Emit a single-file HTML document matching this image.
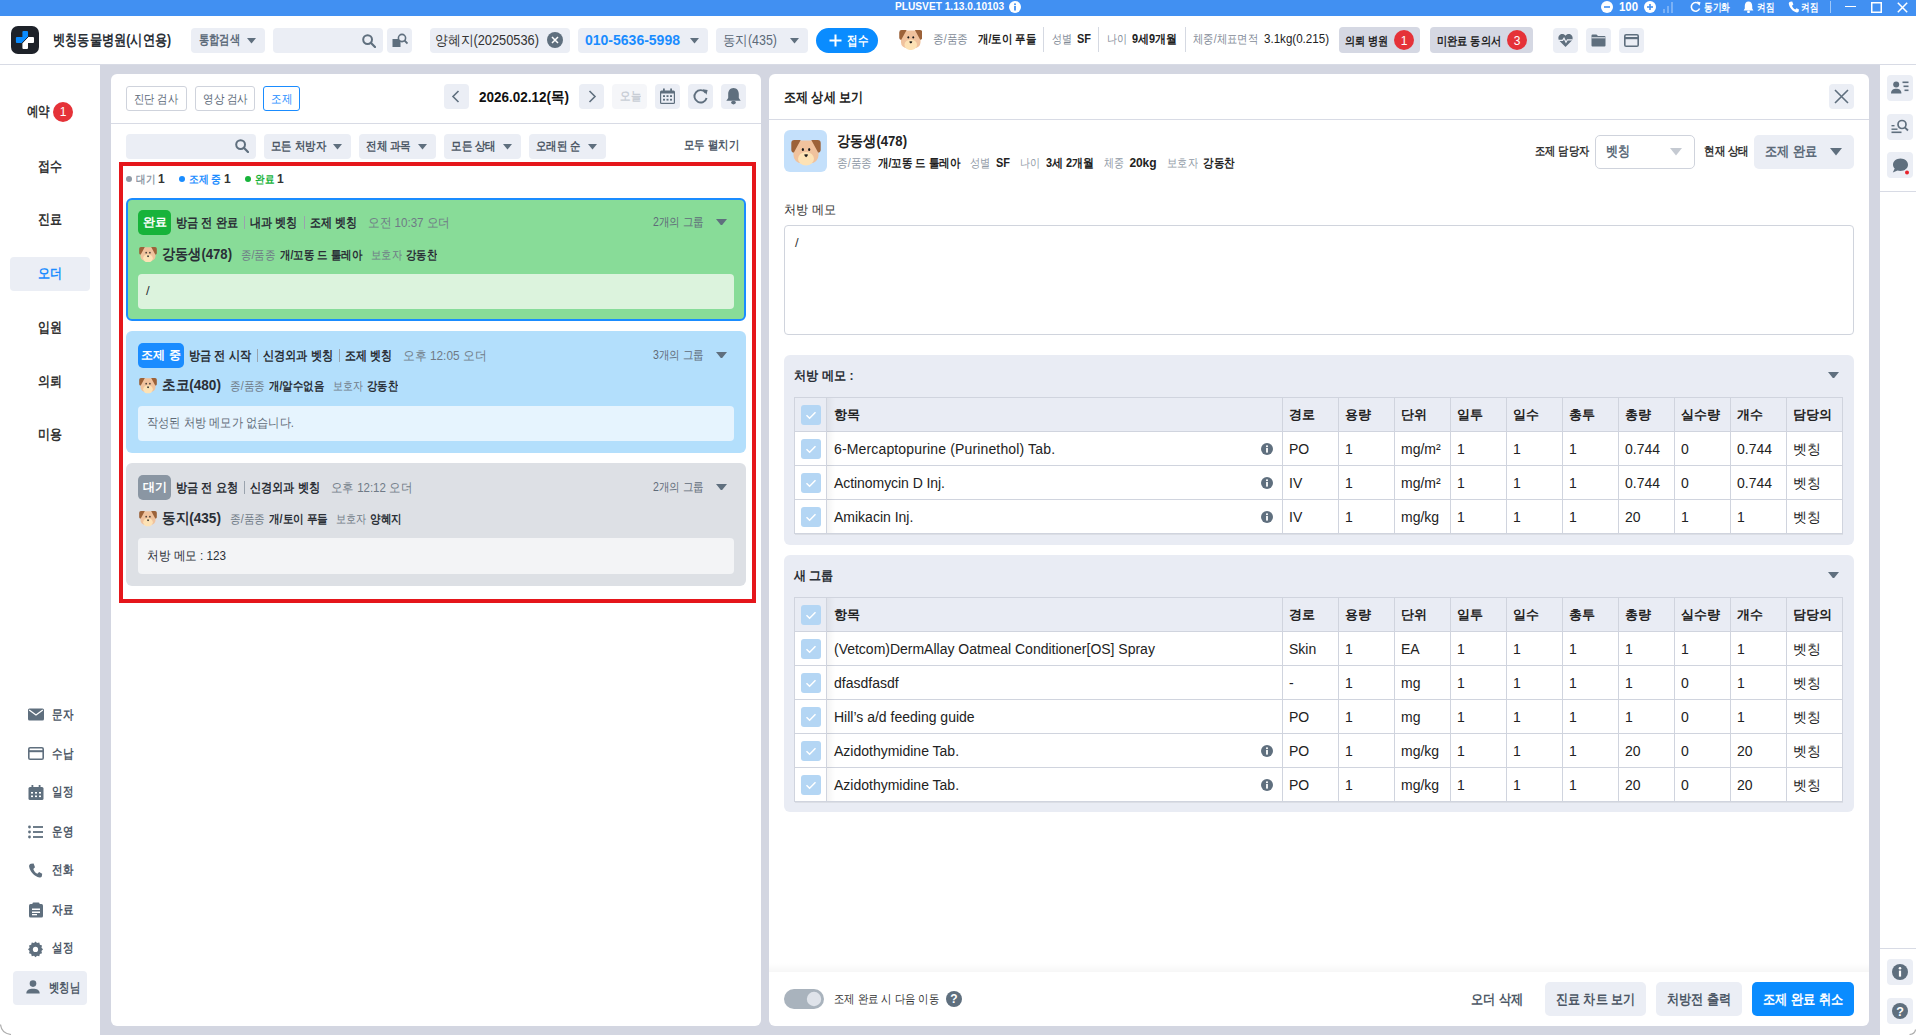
<!DOCTYPE html>
<html><head><meta charset="utf-8"><style>
html,body{margin:0;padding:0;}
body{width:1916px;height:1035px;position:relative;overflow:hidden;font-family:"Liberation Sans",sans-serif;background:#fff;}
.t{position:absolute;white-space:nowrap;}
#t1{transform:scaleX(0.924);transform-origin:0 50%}
#t2{transform:scaleX(0.949);transform-origin:0 50%}
#t3{transform:scaleX(0.788);transform-origin:0 50%}
#t4{transform:scaleX(0.773);transform-origin:0 50%}
#t5{transform:scaleX(0.773);transform-origin:0 50%}
#t6{transform:scaleX(0.814);transform-origin:0 50%}
#t7{transform:scaleX(0.788);transform-origin:0 50%}
#t8{transform:scaleX(0.915);transform-origin:0 50%}
#t9{letter-spacing:0.00px}
#t10{transform:scaleX(0.890);transform-origin:0 50%}
#t11{transform:scaleX(0.808);transform-origin:0 50%}
#t12{transform:scaleX(0.890);transform-origin:0 50%}
#t13{transform:scaleX(0.870);transform-origin:0 50%}
#t14{transform:scaleX(0.833);transform-origin:0 50%}
#t15{transform:scaleX(0.912);transform-origin:0 50%}
#t16{transform:scaleX(0.833);transform-origin:0 50%}
#t17{transform:scaleX(0.912);transform-origin:0 50%}
#t18{transform:scaleX(0.863);transform-origin:0 50%}
#t19{transform:scaleX(0.965);transform-origin:0 50%}
#t20{transform:scaleX(0.837);transform-origin:0 50%}
#t22{transform:scaleX(0.849);transform-origin:0 50%}
#t24{transform:scaleX(0.857);transform-origin:0 50%}
#t25{transform:scaleX(0.857);transform-origin:0 50%}
#t26{transform:scaleX(0.857);transform-origin:0 50%}
#t27{transform:scaleX(0.857);transform-origin:0 50%}
#t28{transform:scaleX(0.857);transform-origin:0 50%}
#t29{transform:scaleX(0.821);transform-origin:0 50%}
#t31{transform:scaleX(0.857);transform-origin:0 50%}
#t32{transform:scaleX(0.808);transform-origin:0 50%}
#t33{transform:scaleX(0.808);transform-origin:0 50%}
#t34{transform:scaleX(0.808);transform-origin:0 50%}
#t35{transform:scaleX(0.808);transform-origin:0 50%}
#t36{transform:scaleX(0.808);transform-origin:0 50%}
#t37{transform:scaleX(0.808);transform-origin:0 50%}
#t38{transform:scaleX(0.808);transform-origin:0 50%}
#t39{transform:scaleX(0.795);transform-origin:0 50%}
#t40{transform:scaleX(0.857);transform-origin:0 50%}
#t41{transform:scaleX(0.876);transform-origin:0 50%}
#t42{transform:scaleX(0.875);transform-origin:0 50%}
#t43{transform:scaleX(0.899);transform-origin:0 50%}
#t44{transform:scaleX(0.875);transform-origin:0 50%}
#t45{transform:scaleX(0.868);transform-origin:0 50%}
#t46{transform:scaleX(0.876);transform-origin:0 50%}
#t47{transform:scaleX(0.876);transform-origin:0 50%}
#t48{transform:scaleX(0.867);transform-origin:0 50%}
#t49{transform:scaleX(0.868);transform-origin:0 50%}
#t50{transform:scaleX(0.864);transform-origin:0 50%}
#t52{transform:scaleX(0.887);transform-origin:0 50%}
#t54{transform:scaleX(0.864);transform-origin:0 50%}
#t57{transform:scaleX(0.858);transform-origin:0 50%}
#t58{transform:scaleX(0.854);transform-origin:0 50%}
#t59{transform:scaleX(0.845);transform-origin:0 50%}
#t60{transform:scaleX(0.894);transform-origin:0 50%}
#t61{transform:scaleX(0.879);transform-origin:0 50%}
#t62{transform:scaleX(0.875);transform-origin:0 50%}
#t63{transform:scaleX(0.877);transform-origin:0 50%}
#t64{transform:scaleX(0.872);transform-origin:0 50%}
#t65{transform:scaleX(0.861);transform-origin:0 50%}
#t66{transform:scaleX(0.861);transform-origin:0 50%}
#t69{transform:scaleX(0.858);transform-origin:0 50%}
#t70{transform:scaleX(0.858);transform-origin:0 50%}
#t71{transform:scaleX(0.845);transform-origin:0 50%}
#t72{transform:scaleX(0.910);transform-origin:0 50%}
#t73{transform:scaleX(0.879);transform-origin:0 50%}
#t74{transform:scaleX(0.907);transform-origin:0 50%}
#t75{transform:scaleX(0.890);transform-origin:0 50%}
#t76{transform:scaleX(0.868);transform-origin:0 50%}
#t77{transform:scaleX(0.833);transform-origin:0 50%}
#t78{transform:scaleX(0.861);transform-origin:0 50%}
#t79{transform:scaleX(0.862);transform-origin:0 50%}
#t81{transform:scaleX(0.858);transform-origin:0 50%}
#t82{transform:scaleX(0.858);transform-origin:0 50%}
#t83{transform:scaleX(0.883);transform-origin:0 50%}
#t84{transform:scaleX(0.879);transform-origin:0 50%}
#t85{transform:scaleX(0.907);transform-origin:0 50%}
#t86{transform:scaleX(0.890);transform-origin:0 50%}
#t87{transform:scaleX(0.885);transform-origin:0 50%}
#t88{transform:scaleX(0.847);transform-origin:0 50%}
#t89{transform:scaleX(0.875);transform-origin:0 50%}
#t90{transform:scaleX(0.896);transform-origin:0 50%}
#t91{transform:scaleX(0.861);transform-origin:0 50%}
#t92{transform:scaleX(0.875);transform-origin:0 50%}
#t93{transform:scaleX(0.890);transform-origin:0 50%}
#t94{transform:scaleX(0.878);transform-origin:0 50%}
#t95{transform:scaleX(0.854);transform-origin:0 50%}
#t96{transform:scaleX(0.912);transform-origin:0 50%}
#t97{transform:scaleX(0.833);transform-origin:0 50%}
#t98{transform:scaleX(0.911);transform-origin:0 50%}
#t99{transform:scaleX(0.833);transform-origin:0 50%}
#t100{letter-spacing:-0.12px}
#t101{transform:scaleX(0.861);transform-origin:0 50%}
#t102{transform:scaleX(0.875);transform-origin:0 50%}
#t103{transform:scaleX(0.852);transform-origin:0 50%}
#t104{transform:scaleX(0.857);transform-origin:0 50%}
#t105{transform:scaleX(0.876);transform-origin:0 50%}
#t106{transform:scaleX(0.868);transform-origin:0 50%}
#t107{transform:scaleX(0.935);transform-origin:0 50%}
#t109{transform:scaleX(0.936);transform-origin:0 50%}
#t121{letter-spacing:0.15px}
#t132{letter-spacing:-0.06px}
#t154{transform:scaleX(0.927);transform-origin:0 50%}
#t166{letter-spacing:-0.01px}
#t221{transform:scaleX(0.865);transform-origin:0 50%}
#t222{transform:scaleX(0.868);transform-origin:0 50%}
#t223{transform:scaleX(0.861);transform-origin:0 50%}
#t224{transform:scaleX(0.866);transform-origin:0 50%}
#t225{transform:scaleX(0.872);transform-origin:0 50%}
</style></head><body>
<div style="position:absolute;left:0px;top:0px;width:1916px;height:1035px;background:#fff;border-radius:0px;"></div>
<div style="position:absolute;left:100px;top:65px;width:1780px;height:970px;background:#d3d6e1;border-radius:0px;"></div>
<div style="position:absolute;left:0px;top:0px;width:1916px;height:16px;background:#4190f2;border-radius:0px;"></div>
<div id="t1" class="t" style="left:895px;top:-1.8px;line-height:16px;font-size:11px;font-weight:700;color:#fff;">PLUSVET 1.13.0.10103</div>
<svg style="position:absolute;left:1009px;top:0.5px" width="12" height="12" viewBox="0 0 12 12"><circle cx="6" cy="6" r="6" fill="#fff"/><rect x="5.1" y="5" width="1.8" height="4.5" fill="#4190f2"/><circle cx="6" cy="3.3" r="1" fill="#4190f2"/></svg>
<svg style="position:absolute;left:1601px;top:0.5px" width="12" height="12" viewBox="0 0 12 12"><circle cx="6" cy="6" r="6" fill="#fff"/><rect x="3" y="5.2" width="6" height="1.6" fill="#4190f2"/></svg>
<div id="t2" class="t" style="left:1619px;top:-1.5px;line-height:16px;font-size:12px;font-weight:700;color:#fff;">100</div>
<svg style="position:absolute;left:1644px;top:0.5px" width="12" height="12" viewBox="0 0 12 12"><circle cx="6" cy="6" r="6" fill="#fff"/><rect x="3" y="5.2" width="6" height="1.6" fill="#4190f2"/><rect x="5.2" y="3" width="1.6" height="6" fill="#4190f2"/></svg>
<svg style="position:absolute;left:1663px;top:1px" width="12" height="12" viewBox="0 0 12 12"><rect x="0" y="8" width="2" height="4" fill="#fff" opacity=".3"/><rect x="4" y="5" width="2" height="7" fill="#fff" opacity=".3"/><rect x="8" y="1" width="2" height="11" fill="#fff" opacity=".3"/></svg>
<svg style="position:absolute;left:1690px;top:0.5px" width="11" height="12" viewBox="0 0 11 12"><path d="M9 3.2A4.3 4.3 0 1 0 9.6 7.5" stroke="#fff" stroke-width="1.6" fill="none"/><path d="M6.8 0.5L10.5 1.2 9.6 4.8Z" fill="#fff"/></svg>
<div id="t3" class="t" style="left:1704px;top:-1.5px;line-height:16px;font-size:11px;font-weight:700;color:#fff;">동기화</div>
<svg style="position:absolute;left:1743px;top:0.5px" width="11" height="12" viewBox="0 0 11 12"><path d="M5.5 0.5C3 0.5 1.8 2.5 1.8 4.8V7.6L0.6 9.6H10.4L9.2 7.6V4.8C9.2 2.5 8 0.5 5.5 0.5Z" fill="#fff"/><circle cx="5.5" cy="10.8" r="1.4" fill="#fff"/></svg>
<div id="t4" class="t" style="left:1757px;top:-1.5px;line-height:16px;font-size:11px;font-weight:700;color:#fff;">켜짐</div>
<svg style="position:absolute;left:1788px;top:0.5px" width="11" height="12" viewBox="0 0 11 12"><path d="M2.2 0.8L4.2 0.5 5.4 3.5 4 4.8C4.6 6.6 5.6 7.8 7.2 8.6L8.6 7.3 11 8.6 10.6 10.8C10.2 11.4 9.5 11.6 8.8 11.5 4.8 10.6 1.5 7 0.8 2.8 0.7 1.8 1.3 1 2.2 0.8Z" fill="#fff"/></svg>
<div id="t5" class="t" style="left:1801px;top:-1.5px;line-height:16px;font-size:11px;font-weight:700;color:#fff;">켜짐</div>
<div style="position:absolute;left:1830px;top:1px;width:1px;height:12px;background:rgba(255,255,255,.5);border-radius:0px;"></div>
<div style="position:absolute;left:1845px;top:5.5px;width:11px;height:1.5px;background:#fff;border-radius:0px;"></div>
<svg style="position:absolute;left:1871px;top:1.5px" width="11" height="11" viewBox="0 0 11 11"><rect x="0.75" y="0.75" width="9.5" height="9.5" stroke="#fff" stroke-width="1.5" fill="none"/></svg>
<svg style="position:absolute;left:1897px;top:1.5px" width="11" height="11" viewBox="0 0 11 11"><path d="M0.8 0.8L10.2 10.2M10.2 0.8L0.8 10.2" stroke="#fff" stroke-width="1.5"/></svg>
<div style="position:absolute;left:0px;top:64px;width:1916px;height:1px;background:#d8dbe5;border-radius:0px;"></div>
<div style="position:absolute;left:11px;top:26px;width:28px;height:28px;background:#1e2229;border-radius:7px;"></div>
<svg style="position:absolute;left:11px;top:26px" width="28" height="28" viewBox="0 0 28 28"><path d="M12.4 4.9H16A1 1 0 0 1 17 5.9V11.1L11.4 16.9H5.9A1 1 0 0 1 4.9 15.9V12.1A1 1 0 0 1 5.9 11.1H11.4V5.9A1 1 0 0 1 12.4 4.9Z" fill="#0a8cff"/><path d="M17 11.1H22A1 1 0 0 1 23 12.1V15.9A1 1 0 0 1 22 16.9H17V21.9A1 1 0 0 1 16 22.9H12.4A1 1 0 0 1 11.4 21.9V16.9Z" fill="#fff"/><path d="M17.4 10.6L10.9 17.3" stroke="#1e2229" stroke-width="1"/></svg>
<div id="t6" class="t" style="left:53px;top:29.0px;line-height:22px;font-size:15px;font-weight:700;color:#2a2f36;">벳칭동물병원(시연용)</div>
<div style="position:absolute;left:191px;top:28px;width:74px;height:25px;background:#ebeef5;border-radius:4px;"></div>
<div id="t7" class="t" style="left:198.5px;top:30.0px;line-height:19px;font-size:13px;font-weight:700;color:#5c6a79;">통합검색</div>
<svg style="position:absolute;left:247px;top:38.21px" width="9" height="5.58" viewBox="0 0 9 5.58"><path d="M0 0H9L4.5 5.58Z" fill="#5f6f7e"/></svg>
<div style="position:absolute;left:273px;top:28px;width:110px;height:25px;background:#ebeef5;border-radius:4px;"></div>
<svg style="position:absolute;left:362px;top:34px" width="14" height="14" viewBox="0 0 14 14"><circle cx="5.6" cy="5.6" r="4.4" stroke="#5f6f7e" stroke-width="2" fill="none"/><path d="M8.8 8.8L13 13" stroke="#5f6f7e" stroke-width="2.2" stroke-linecap="round"/></svg>
<div style="position:absolute;left:387px;top:28px;width:25px;height:25px;background:#ebeef5;border-radius:4px;"></div>
<svg style="position:absolute;left:392px;top:33px" width="16" height="14" viewBox="0 0 16 14"><rect x="0.5" y="6" width="8" height="8" fill="#5f6f7e"/><circle cx="10" cy="5" r="3.6" stroke="#5f6f7e" stroke-width="1.6" fill="#ebeef5"/><path d="M12.5 7.5L15.5 10.5" stroke="#5f6f7e" stroke-width="1.8"/></svg>
<div style="position:absolute;left:430px;top:28px;width:140px;height:25px;background:#ebeef5;border-radius:4px;"></div>
<div id="t8" class="t" style="left:435px;top:30.0px;line-height:21px;font-size:14px;font-weight:400;color:#333;">양혜지(20250536)</div>
<svg style="position:absolute;left:547px;top:32px" width="16" height="16" viewBox="0 0 16 16"><circle cx="8" cy="8" r="8" fill="#5f6f7e"/><path d="M5 5L11 11M11 5L5 11" stroke="#fff" stroke-width="1.5"/></svg>
<div style="position:absolute;left:578px;top:28px;width:130px;height:25px;background:#ebeef5;border-radius:4px;"></div>
<div id="t9" class="t" style="left:585px;top:30.0px;line-height:21px;font-size:14px;font-weight:700;color:#1a8cff;">010-5636-5998</div>
<svg style="position:absolute;left:690px;top:38.21px" width="9" height="5.58" viewBox="0 0 9 5.58"><path d="M0 0H9L4.5 5.58Z" fill="#5f6f7e"/></svg>
<div style="position:absolute;left:716px;top:28px;width:92px;height:25px;background:#ebeef5;border-radius:4px;"></div>
<div id="t10" class="t" style="left:723px;top:30.0px;line-height:21px;font-size:14px;font-weight:400;color:#5c6a79;">동지(435)</div>
<svg style="position:absolute;left:790px;top:38.21px" width="9" height="5.58" viewBox="0 0 9 5.58"><path d="M0 0H9L4.5 5.58Z" fill="#5f6f7e"/></svg>
<div style="position:absolute;left:816px;top:28px;width:62px;height:25px;background:#0a8cff;border-radius:13px;"></div>
<svg style="position:absolute;left:829px;top:34px" width="13" height="13" viewBox="0 0 13 13"><path d="M6.5 0.5V12.5M0.5 6.5H12.5" stroke="#fff" stroke-width="2"/></svg>
<div id="t11" class="t" style="left:847px;top:31.0px;line-height:19px;font-size:13px;font-weight:700;color:#fff;">접수</div>
<svg style="position:absolute;left:898.5px;top:29.8px" width="23.5" height="20.366666666666667" viewBox="0 0 30 26"><path d="M5.5 0.5H24.5A3 3 0 0 1 27.5 3.5V15.5A8 7.7 0 0 1 19.5 23.2H10.5A8 7.7 0 0 1 2.5 15.5V3.5A3 3 0 0 1 5.5 0.5Z" fill="#f0c29d"/><path d="M3.3 0.1H9.7L2.9 12.6C1.5 12.6 0.3 11.6 0.3 10V3.1A3 3 0 0 1 3.3 0.1Z" fill="#9c6239"/><path d="M26.7 0.1H20.3L27.1 12.6C28.5 12.6 29.7 11.6 29.7 10V3.1A3 3 0 0 0 26.7 0.1Z" fill="#9c6239"/><ellipse cx="15" cy="18.8" rx="8" ry="6.8" fill="#fde2b5"/><ellipse cx="11.9" cy="9.4" rx="1.1" ry="1.5" fill="#1a1a1a"/><ellipse cx="18.2" cy="9.4" rx="1.1" ry="1.5" fill="#1a1a1a"/><path d="M13.2 14.6Q15.1 14.1 17 14.6Q16.8 16.2 15.1 17.2Q13.4 16.2 13.2 14.6Z" fill="#1a1a1a"/></svg>
<div id="t12" class="t" style="left:933px;top:30.3px;line-height:18px;font-size:12px;font-weight:400;color:#7f8a96;">종/품종</div>
<div id="t13" class="t" style="left:978px;top:30.3px;line-height:18px;font-size:12px;font-weight:700;color:#222;">개/토이 푸들</div>
<div style="position:absolute;left:1043px;top:27px;width:1px;height:25px;background:#d5d9e2;border-radius:0px;"></div>
<div id="t14" class="t" style="left:1052px;top:30.3px;line-height:18px;font-size:12px;font-weight:400;color:#7f8a96;">성별</div>
<div id="t15" class="t" style="left:1077px;top:30.3px;line-height:18px;font-size:12px;font-weight:700;color:#222;">SF</div>
<div style="position:absolute;left:1098px;top:27px;width:1px;height:25px;background:#d5d9e2;border-radius:0px;"></div>
<div id="t16" class="t" style="left:1107px;top:30.3px;line-height:18px;font-size:12px;font-weight:400;color:#7f8a96;">나이</div>
<div id="t17" class="t" style="left:1132px;top:30.3px;line-height:18px;font-size:12px;font-weight:700;color:#222;">9세9개월</div>
<div style="position:absolute;left:1185px;top:27px;width:1px;height:25px;background:#d5d9e2;border-radius:0px;"></div>
<div id="t18" class="t" style="left:1193px;top:30.3px;line-height:18px;font-size:12px;font-weight:400;color:#7f8a96;">체중/체표면적</div>
<div id="t19" class="t" style="left:1264px;top:30.3px;line-height:18px;font-size:12px;font-weight:500;color:#222;">3.1kg(0.215)</div>
<div style="position:absolute;left:1339px;top:27px;width:81px;height:26px;background:#d5d8e3;border-radius:4px;"></div>
<div id="t20" class="t" style="left:1345px;top:31.5px;line-height:18px;font-size:12px;font-weight:700;color:#222;">의뢰 병원</div>
<svg style="position:absolute;left:1394px;top:30px" width="20" height="20" viewBox="0 0 20 20"><circle cx="10" cy="10" r="10" fill="#e53238"/></svg>
<div id="t21" class="t" style="left:1394px;top:31.5px;line-height:18px;font-size:12px;font-weight:400;color:#fff;width:20px;text-align:center;">1</div>
<div style="position:absolute;left:1430px;top:27px;width:103px;height:26px;background:#d5d8e3;border-radius:4px;"></div>
<div id="t22" class="t" style="left:1437px;top:31.5px;line-height:18px;font-size:12px;font-weight:700;color:#222;">미완료 동의서</div>
<svg style="position:absolute;left:1507px;top:30px" width="20" height="20" viewBox="0 0 20 20"><circle cx="10" cy="10" r="10" fill="#e53238"/></svg>
<div id="t23" class="t" style="left:1507px;top:31.5px;line-height:18px;font-size:12px;font-weight:400;color:#fff;width:20px;text-align:center;">3</div>
<div style="position:absolute;left:1553px;top:28px;width:25px;height:25px;background:#ebeef5;border-radius:4px;"></div>
<div style="position:absolute;left:1586px;top:28px;width:25px;height:25px;background:#ebeef5;border-radius:4px;"></div>
<div style="position:absolute;left:1619px;top:28px;width:25px;height:25px;background:#ebeef5;border-radius:4px;"></div>
<svg style="position:absolute;left:1558px;top:33px" width="15" height="15" viewBox="0 0 15 15"><path d="M7.5 14L1.3 7.8C-0.3 6 0.2 2.6 2.3 1.5 4.2 0.5 6.4 1.1 7.5 2.8 8.6 1.1 10.8 0.5 12.7 1.5 14.8 2.6 15.3 6 13.7 7.8Z" fill="#5f6f7e"/><path d="M0.5 7.3H4.6L6 5.2 8 9.2 9.4 6.8H14.5" stroke="#ebeef5" stroke-width="1.2" fill="none"/></svg>
<svg style="position:absolute;left:1591px;top:34px" width="15" height="13" viewBox="0 0 15 13"><path d="M0.5 1.5A1 1 0 0 1 1.5 0.5H5.5L7 2H13.5A1 1 0 0 1 14.5 3V11.5A1 1 0 0 1 13.5 12.5H1.5A1 1 0 0 1 0.5 11.5Z" fill="#5f6f7e"/><rect x="0.5" y="3.3" width="14" height="1" fill="#ebeef5"/></svg>
<svg style="position:absolute;left:1624px;top:34px" width="15" height="13" viewBox="0 0 15 13"><rect x="0.8" y="0.8" width="13.4" height="11.4" rx="1.3" stroke="#5f6f7e" stroke-width="1.6" fill="none"/><rect x="0.8" y="3" width="13.4" height="2.2" fill="#5f6f7e"/></svg>
<div id="t24" class="t" style="left:38px;top:155.5px;line-height:21px;font-size:14px;font-weight:700;color:#333;">접수</div>
<div id="t25" class="t" style="left:38px;top:209.0px;line-height:21px;font-size:14px;font-weight:700;color:#333;">진료</div>
<div id="t26" class="t" style="left:38px;top:317.0px;line-height:21px;font-size:14px;font-weight:700;color:#333;">입원</div>
<div id="t27" class="t" style="left:38px;top:370.5px;line-height:21px;font-size:14px;font-weight:700;color:#333;">의뢰</div>
<div id="t28" class="t" style="left:38px;top:424.0px;line-height:21px;font-size:14px;font-weight:700;color:#333;">미용</div>
<div id="t29" class="t" style="left:27px;top:101.0px;line-height:21px;font-size:14px;font-weight:700;color:#333;">예약</div>
<svg style="position:absolute;left:53px;top:102px" width="20" height="20" viewBox="0 0 20 20"><circle cx="10" cy="10" r="10" fill="#e53238"/></svg>
<div id="t30" class="t" style="left:53px;top:103.0px;line-height:18px;font-size:12px;font-weight:400;color:#fff;width:20px;text-align:center;">1</div>
<div style="position:absolute;left:10px;top:257px;width:80px;height:34px;background:#ebeef5;border-radius:4px;"></div>
<div id="t31" class="t" style="left:38px;top:263.0px;line-height:21px;font-size:14px;font-weight:700;color:#1a8cff;">오더</div>
<svg style="position:absolute;left:28px;top:707px" width="17" height="17" viewBox="0 0 17 17"><rect x="0" y="1.5" width="16" height="12" rx="1.5" fill="#5f6f7e"/><path d="M1.2 3L8 8 14.8 3" stroke="#fff" stroke-width="1.3" fill="none"/></svg>
<div id="t32" class="t" style="left:51.5px;top:704.7px;line-height:19px;font-size:13px;font-weight:700;color:#4d5866;">문자</div>
<svg style="position:absolute;left:28px;top:746px" width="17" height="17" viewBox="0 0 17 17"><rect x="0.8" y="1.8" width="14.4" height="11.4" rx="1.3" stroke="#5f6f7e" stroke-width="1.6" fill="none"/><rect x="0.8" y="4.2" width="14.4" height="2" fill="#5f6f7e"/></svg>
<div id="t33" class="t" style="left:51.5px;top:743.7px;line-height:19px;font-size:13px;font-weight:700;color:#4d5866;">수납</div>
<svg style="position:absolute;left:28px;top:784.5px" width="17" height="17" viewBox="0 0 17 17"><rect x="0.5" y="2" width="15" height="13" rx="1.5" fill="#5f6f7e"/><rect x="3.5" y="0" width="1.8" height="3.5" fill="#5f6f7e"/><rect x="10.7" y="0" width="1.8" height="3.5" fill="#5f6f7e"/><g fill="#fff"><rect x="3" y="7" width="2" height="1.6"/><rect x="7" y="7" width="2" height="1.6"/><rect x="11" y="7" width="2" height="1.6"/><rect x="3" y="10.5" width="2" height="1.6"/><rect x="7" y="10.5" width="2" height="1.6"/><rect x="11" y="10.5" width="2" height="1.6"/></g></svg>
<div id="t34" class="t" style="left:51.5px;top:782.2px;line-height:19px;font-size:13px;font-weight:700;color:#4d5866;">일정</div>
<svg style="position:absolute;left:28px;top:824px" width="17" height="17" viewBox="0 0 17 17"><g fill="#5f6f7e"><circle cx="1.5" cy="3" r="1.4"/><circle cx="1.5" cy="8" r="1.4"/><circle cx="1.5" cy="13" r="1.4"/><rect x="5" y="2.1" width="10" height="1.8"/><rect x="5" y="7.1" width="10" height="1.8"/><rect x="5" y="12.1" width="10" height="1.8"/></g></svg>
<div id="t35" class="t" style="left:51.5px;top:821.7px;line-height:19px;font-size:13px;font-weight:700;color:#4d5866;">운영</div>
<svg style="position:absolute;left:28px;top:862.5px" width="17" height="17" viewBox="0 0 17 17"><path d="M3 0.8L5.6 0.5 7 4.3 5.3 5.9C6.1 8.2 7.4 9.7 9.4 10.7L11.1 9.1 14.2 10.7 13.8 13.5C13.3 14.3 12.4 14.6 11.5 14.4 6.3 13.3 2 8.7 1.1 3.4 1 2.2 1.8 1.1 3 0.8Z" fill="#5f6f7e"/></svg>
<div id="t36" class="t" style="left:51.5px;top:860.2px;line-height:19px;font-size:13px;font-weight:700;color:#4d5866;">전화</div>
<svg style="position:absolute;left:28px;top:902px" width="17" height="17" viewBox="0 0 17 17"><rect x="1" y="2" width="14" height="13.5" rx="1.5" fill="#5f6f7e"/><rect x="4.5" y="0.5" width="7" height="3" rx="1" fill="#5f6f7e"/><g fill="#fff"><rect x="4" y="6.5" width="8" height="1.5"/><rect x="4" y="9.5" width="8" height="1.5"/><rect x="4" y="12" width="5" height="1.3"/></g></svg>
<div id="t37" class="t" style="left:51.5px;top:899.7px;line-height:19px;font-size:13px;font-weight:700;color:#4d5866;">자료</div>
<svg style="position:absolute;left:28px;top:940.5px" width="17" height="17" viewBox="0 0 17 17"><path d="M8 0.5L9.6 2.2 12 1.7 12.6 4 14.9 4.8 14.3 7.2 16 8.9 14.3 10.6 14.9 13 12.6 13.8 12 16.1 9.6 15.6 8 17.3 6.4 15.6 4 16.1 3.4 13.8 1.1 13 1.7 10.6 0 8.9 1.7 7.2 1.1 4.8 3.4 4 4 1.7 6.4 2.2Z" fill="#5f6f7e" transform="scale(0.94)"/><circle cx="7.5" cy="8.4" r="2.6" fill="#fff"/></svg>
<div id="t38" class="t" style="left:51.5px;top:938.2px;line-height:19px;font-size:13px;font-weight:700;color:#4d5866;">설정</div>
<div style="position:absolute;left:13px;top:971px;width:74px;height:34px;background:#ebeef5;border-radius:4px;"></div>
<svg style="position:absolute;left:26px;top:980px" width="14" height="14" viewBox="0 0 14 14"><circle cx="7" cy="3.6" r="3.3" fill="#5f6f7e"/><path d="M0.3 13.5C0.3 10 3.2 8.8 7 8.8S13.7 10 13.7 13.5Z" fill="#5f6f7e"/></svg>
<div id="t39" class="t" style="left:49px;top:977.8px;line-height:19px;font-size:13px;font-weight:700;color:#4d5866;">벳칭님</div>
<div style="position:absolute;left:111px;top:74px;width:650px;height:952px;background:#fff;border-radius:6px;"></div>
<div style="position:absolute;left:126px;top:86px;width:61px;height:25px;background:#fff;border-radius:3px;border:1px solid #cfd3dc;box-sizing:border-box;"></div>
<div id="t40" class="t" style="left:134px;top:89.5px;line-height:18px;font-size:12px;font-weight:400;color:#5c6a79;">진단 검사</div>
<div style="position:absolute;left:195px;top:86px;width:60px;height:25px;background:#fff;border-radius:3px;border:1px solid #cfd3dc;box-sizing:border-box;"></div>
<div id="t41" class="t" style="left:202.5px;top:89.5px;line-height:18px;font-size:12px;font-weight:400;color:#5c6a79;">영상 검사</div>
<div style="position:absolute;left:263px;top:86px;width:37px;height:25px;background:#fff;border-radius:3px;border:1px solid #1a8cff;box-sizing:border-box;"></div>
<div id="t42" class="t" style="left:271px;top:89.5px;line-height:18px;font-size:12px;font-weight:400;color:#1a8cff;">조제</div>
<div style="position:absolute;left:444px;top:84px;width:25px;height:25px;background:#ebeef5;border-radius:4px;"></div>
<svg style="position:absolute;left:451px;top:90px" width="10" height="13" viewBox="0 0 10 13"><path d="M7.5 1L2 6.5 7.5 12" stroke="#5f6f7e" stroke-width="1.6" fill="none"/></svg>
<div id="t43" class="t" style="left:479px;top:86.0px;line-height:22px;font-size:15px;font-weight:700;color:#111;">2026.02.12(목)</div>
<div style="position:absolute;left:579px;top:84px;width:25px;height:25px;background:#ebeef5;border-radius:4px;"></div>
<svg style="position:absolute;left:587px;top:90px" width="10" height="13" viewBox="0 0 10 13"><path d="M2.5 1L8 6.5 2.5 12" stroke="#5f6f7e" stroke-width="1.6" fill="none"/></svg>
<div style="position:absolute;left:612px;top:84px;width:35px;height:25px;background:#f5f6f9;border-radius:4px;"></div>
<div id="t44" class="t" style="left:619.5px;top:86.7px;line-height:18px;font-size:12px;font-weight:700;color:#c9ced6;">오늘</div>
<div style="position:absolute;left:655px;top:84px;width:25px;height:25px;background:#ebeef5;border-radius:4px;"></div>
<div style="position:absolute;left:688px;top:84px;width:25px;height:25px;background:#ebeef5;border-radius:4px;"></div>
<div style="position:absolute;left:721px;top:84px;width:25px;height:25px;background:#ebeef5;border-radius:4px;"></div>
<svg style="position:absolute;left:659px;top:88px" width="17" height="17" viewBox="0 0 17 17"><rect x="1" y="2.5" width="15" height="13.5" rx="1.5" fill="#5f6f7e"/><rect x="4" y="0.5" width="1.8" height="4" fill="#5f6f7e"/><rect x="11.2" y="0.5" width="1.8" height="4" fill="#5f6f7e"/><rect x="2.2" y="5.5" width="12.6" height="9.3" fill="#ebeef5"/><g fill="#5f6f7e"><rect x="4" y="7.2" width="2" height="1.8"/><rect x="7.5" y="7.2" width="2" height="1.8"/><rect x="11" y="7.2" width="2" height="1.8"/><rect x="4" y="10.8" width="2" height="1.8"/><rect x="7.5" y="10.8" width="2" height="1.8"/><rect x="11" y="10.8" width="2" height="1.8"/></g></svg>
<svg style="position:absolute;left:692px;top:88px" width="17" height="17" viewBox="0 0 17 17"><path d="M13.6 4.6A6.2 6.2 0 1 0 14.6 10" stroke="#5f6f7e" stroke-width="1.9" fill="none"/><path d="M10.6 1.2L15.6 2 14.5 6.8Z" fill="#5f6f7e"/></svg>
<svg style="position:absolute;left:725px;top:87px" width="17" height="18" viewBox="0 0 17 18"><path d="M8.5 1C5 1 3.2 3.8 3.2 7V11L1.3 13.8H15.7L13.8 11V7C13.8 3.8 12 1 8.5 1Z" fill="#5f6f7e"/><ellipse cx="8.5" cy="15.6" rx="2.4" ry="1.8" fill="#5f6f7e"/></svg>
<div style="position:absolute;left:111px;top:123px;width:650px;height:1px;background:#d8dbe5;border-radius:0px;"></div>
<div style="position:absolute;left:126px;top:134px;width:130px;height:25px;background:#ebeef5;border-radius:4px;"></div>
<svg style="position:absolute;left:235px;top:139px" width="14" height="14" viewBox="0 0 14 14"><circle cx="5.6" cy="5.6" r="4.4" stroke="#5f6f7e" stroke-width="2" fill="none"/><path d="M8.8 8.8L13 13" stroke="#5f6f7e" stroke-width="2.2" stroke-linecap="round"/></svg>
<div style="position:absolute;left:264px;top:134px;width:87px;height:25px;background:#ebeef5;border-radius:4px;"></div>
<div id="t45" class="t" style="left:271px;top:136.5px;line-height:18px;font-size:12px;font-weight:700;color:#4d5866;">모든 처방자</div>
<svg style="position:absolute;left:333px;top:144.21px" width="9" height="5.58" viewBox="0 0 9 5.58"><path d="M0 0H9L4.5 5.58Z" fill="#5f6f7e"/></svg>
<div style="position:absolute;left:359px;top:134px;width:77px;height:25px;background:#ebeef5;border-radius:4px;"></div>
<div id="t46" class="t" style="left:366px;top:136.5px;line-height:18px;font-size:12px;font-weight:700;color:#4d5866;">전체 과목</div>
<svg style="position:absolute;left:418px;top:144.21px" width="9" height="5.58" viewBox="0 0 9 5.58"><path d="M0 0H9L4.5 5.58Z" fill="#5f6f7e"/></svg>
<div style="position:absolute;left:444px;top:134px;width:77px;height:25px;background:#ebeef5;border-radius:4px;"></div>
<div id="t47" class="t" style="left:451px;top:136.5px;line-height:18px;font-size:12px;font-weight:700;color:#4d5866;">모든 상태</div>
<svg style="position:absolute;left:503px;top:144.21px" width="9" height="5.58" viewBox="0 0 9 5.58"><path d="M0 0H9L4.5 5.58Z" fill="#5f6f7e"/></svg>
<div style="position:absolute;left:529px;top:134px;width:77px;height:25px;background:#ebeef5;border-radius:4px;"></div>
<div id="t48" class="t" style="left:536px;top:136.5px;line-height:18px;font-size:12px;font-weight:700;color:#4d5866;">오래된 순</div>
<svg style="position:absolute;left:587.5px;top:144.21px" width="9.0" height="5.58" viewBox="0 0 9.0 5.58"><path d="M0 0H9.0L4.5 5.58Z" fill="#5f6f7e"/></svg>
<div id="t49" class="t" style="left:684px;top:136.0px;line-height:18px;font-size:12px;font-weight:700;color:#4d5866;">모두 펼치기</div>
<div style="position:absolute;left:119px;top:162px;width:637px;height:441px;background:transparent;border-radius:0px;border:4px solid #e5161b;box-sizing:border-box;"></div>
<svg style="position:absolute;left:126px;top:176px" width="6" height="6" viewBox="0 0 6 6"><circle cx="3" cy="3" r="3" fill="#8e99a6"/></svg>
<div id="t50" class="t" style="left:136px;top:171.0px;line-height:16px;font-size:11px;font-weight:700;color:#8e99a6;">대기</div>
<div id="t51" class="t" style="left:158px;top:170.0px;line-height:18px;font-size:12px;font-weight:700;color:#333;">1</div>
<svg style="position:absolute;left:179px;top:176px" width="6" height="6" viewBox="0 0 6 6"><circle cx="3" cy="3" r="3" fill="#1a8cff"/></svg>
<div id="t52" class="t" style="left:189px;top:171.0px;line-height:16px;font-size:11px;font-weight:700;color:#1a8cff;">조제 중</div>
<div id="t53" class="t" style="left:224px;top:170.0px;line-height:18px;font-size:12px;font-weight:700;color:#333;">1</div>
<svg style="position:absolute;left:245px;top:176px" width="6" height="6" viewBox="0 0 6 6"><circle cx="3" cy="3" r="3" fill="#17b33a"/></svg>
<div id="t54" class="t" style="left:254.5px;top:171.0px;line-height:16px;font-size:11px;font-weight:700;color:#17b33a;">완료</div>
<div id="t55" class="t" style="left:277px;top:170.0px;line-height:18px;font-size:12px;font-weight:700;color:#333;">1</div>
<div style="position:absolute;left:126px;top:198px;width:620px;height:123px;background:#88dc98;border-radius:6px;border:2px solid #1a8cff;box-sizing:border-box;"></div>
<div style="position:absolute;left:138px;top:209.5px;width:33px;height:25.0px;background:#17b33a;border-radius:5px;"></div>
<div id="t56" class="t" style="left:138px;top:213.0px;line-height:18px;font-size:12px;font-weight:700;color:#fff;width:33px;text-align:center;">완료</div>
<div id="t57" class="t" style="left:176px;top:212.5px;line-height:19px;font-size:13px;font-weight:700;color:#2a2f36;">방금 전 완료</div>
<div style="position:absolute;left:243.5px;top:215.5px;width:1.0px;height:13.0px;background:#9aa3ad;border-radius:0px;"></div>
<div id="t58" class="t" style="left:249.5px;top:212.5px;line-height:19px;font-size:13px;font-weight:700;color:#2a2f36;">내과 벳칭</div>
<div style="position:absolute;left:303.5px;top:215.5px;width:1.0px;height:13.0px;background:#9aa3ad;border-radius:0px;"></div>
<div id="t59" class="t" style="left:309.5px;top:212.5px;line-height:19px;font-size:13px;font-weight:700;color:#2a2f36;">조제 벳칭</div>
<div id="t60" class="t" style="left:367.5px;top:212.5px;line-height:19px;font-size:13px;font-weight:400;color:#6f7a86;">오전 10:37 오더</div>
<div id="t61" class="t" style="left:653px;top:213.0px;line-height:18px;font-size:12px;font-weight:400;color:#5f6b78;">2개의 그룹</div>
<svg style="position:absolute;left:716px;top:218.59px" width="11" height="6.82" viewBox="0 0 11 6.82"><path d="M0 0H11L5.5 6.82Z" fill="#5f6f7e"/></svg>
<svg style="position:absolute;left:139px;top:246.7px" width="18" height="15.6" viewBox="0 0 30 26"><path d="M5.5 0.5H24.5A3 3 0 0 1 27.5 3.5V15.5A8 7.7 0 0 1 19.5 23.2H10.5A8 7.7 0 0 1 2.5 15.5V3.5A3 3 0 0 1 5.5 0.5Z" fill="#f0c29d"/><path d="M3.3 0.1H9.7L2.9 12.6C1.5 12.6 0.3 11.6 0.3 10V3.1A3 3 0 0 1 3.3 0.1Z" fill="#9c6239"/><path d="M26.7 0.1H20.3L27.1 12.6C28.5 12.6 29.7 11.6 29.7 10V3.1A3 3 0 0 0 26.7 0.1Z" fill="#9c6239"/><ellipse cx="15" cy="18.8" rx="8" ry="6.8" fill="#fde2b5"/><ellipse cx="11.9" cy="9.4" rx="1.1" ry="1.5" fill="#1a1a1a"/><ellipse cx="18.2" cy="9.4" rx="1.1" ry="1.5" fill="#1a1a1a"/><path d="M13.2 14.6Q15.1 14.1 17 14.6Q16.8 16.2 15.1 17.2Q13.4 16.2 13.2 14.6Z" fill="#1a1a1a"/></svg>
<div id="t62" class="t" style="left:162px;top:242.7px;line-height:22px;font-size:15px;font-weight:700;color:#2a2f36;">강동생(478)</div>
<div id="t63" class="t" style="left:241px;top:245.5px;line-height:18px;font-size:12px;font-weight:400;color:#6f7a86;">종/품종</div>
<div id="t64" class="t" style="left:280px;top:245.5px;line-height:18px;font-size:12px;font-weight:700;color:#2a2f36;">개/꼬똥 드 툴레아</div>
<div id="t65" class="t" style="left:370.5px;top:245.5px;line-height:18px;font-size:12px;font-weight:400;color:#6f7a86;">보호자</div>
<div id="t66" class="t" style="left:405.5px;top:245.5px;line-height:18px;font-size:12px;font-weight:700;color:#2a2f36;">강동찬</div>
<div style="position:absolute;left:138px;top:273.5px;width:596px;height:35.5px;background:#dcf3dd;border-radius:4px;"></div>
<div id="t67" class="t" style="left:146px;top:280.9px;line-height:19px;font-size:13px;font-weight:400;color:#2a2f36;">/</div>
<div style="position:absolute;left:126px;top:331px;width:620px;height:122px;background:#b3dffc;border-radius:6px;"></div>
<div style="position:absolute;left:138px;top:342.5px;width:46px;height:25.0px;background:#1a8cff;border-radius:5px;"></div>
<div id="t68" class="t" style="left:138px;top:346.0px;line-height:18px;font-size:12px;font-weight:700;color:#fff;width:46px;text-align:center;">조제 중</div>
<div id="t69" class="t" style="left:189px;top:345.5px;line-height:19px;font-size:13px;font-weight:700;color:#2a2f36;">방금 전 시작</div>
<div style="position:absolute;left:257px;top:348.5px;width:1px;height:13.0px;background:#9aa3ad;border-radius:0px;"></div>
<div id="t70" class="t" style="left:263px;top:345.5px;line-height:19px;font-size:13px;font-weight:700;color:#2a2f36;">신경외과 벳칭</div>
<div style="position:absolute;left:339px;top:348.5px;width:1px;height:13.0px;background:#9aa3ad;border-radius:0px;"></div>
<div id="t71" class="t" style="left:345px;top:345.5px;line-height:19px;font-size:13px;font-weight:700;color:#2a2f36;">조제 벳칭</div>
<div id="t72" class="t" style="left:403px;top:345.5px;line-height:19px;font-size:13px;font-weight:400;color:#6f7a86;">오후 12:05 오더</div>
<div id="t73" class="t" style="left:653px;top:346.0px;line-height:18px;font-size:12px;font-weight:400;color:#5f6b78;">3개의 그룹</div>
<svg style="position:absolute;left:716px;top:351.59px" width="11" height="6.82" viewBox="0 0 11 6.82"><path d="M0 0H11L5.5 6.82Z" fill="#5f6f7e"/></svg>
<svg style="position:absolute;left:139px;top:378.2px" width="18" height="15.6" viewBox="0 0 30 26"><path d="M5.5 0.5H24.5A3 3 0 0 1 27.5 3.5V15.5A8 7.7 0 0 1 19.5 23.2H10.5A8 7.7 0 0 1 2.5 15.5V3.5A3 3 0 0 1 5.5 0.5Z" fill="#f0c29d"/><path d="M3.3 0.1H9.7L2.9 12.6C1.5 12.6 0.3 11.6 0.3 10V3.1A3 3 0 0 1 3.3 0.1Z" fill="#9c6239"/><path d="M26.7 0.1H20.3L27.1 12.6C28.5 12.6 29.7 11.6 29.7 10V3.1A3 3 0 0 0 26.7 0.1Z" fill="#9c6239"/><ellipse cx="15" cy="18.8" rx="8" ry="6.8" fill="#fde2b5"/><ellipse cx="11.9" cy="9.4" rx="1.1" ry="1.5" fill="#1a1a1a"/><ellipse cx="18.2" cy="9.4" rx="1.1" ry="1.5" fill="#1a1a1a"/><path d="M13.2 14.6Q15.1 14.1 17 14.6Q16.8 16.2 15.1 17.2Q13.4 16.2 13.2 14.6Z" fill="#1a1a1a"/></svg>
<div id="t74" class="t" style="left:162px;top:374.2px;line-height:22px;font-size:15px;font-weight:700;color:#2a2f36;">초코(480)</div>
<div id="t75" class="t" style="left:229.5px;top:377.0px;line-height:18px;font-size:12px;font-weight:400;color:#6f7a86;">종/품종</div>
<div id="t76" class="t" style="left:268.5px;top:377.0px;line-height:18px;font-size:12px;font-weight:700;color:#2a2f36;">개/알수없음</div>
<div id="t77" class="t" style="left:333px;top:377.0px;line-height:18px;font-size:12px;font-weight:400;color:#6f7a86;">보호자</div>
<div id="t78" class="t" style="left:367px;top:377.0px;line-height:18px;font-size:12px;font-weight:700;color:#2a2f36;">강동찬</div>
<div style="position:absolute;left:138px;top:406px;width:596px;height:35px;background:#e6f4fe;border-radius:4px;"></div>
<div id="t79" class="t" style="left:146.5px;top:413.2px;line-height:19px;font-size:13px;font-weight:400;color:#5f6b78;">작성된 처방 메모가 없습니다.</div>
<div style="position:absolute;left:126px;top:463px;width:620px;height:123px;background:#dde0e5;border-radius:6px;"></div>
<div style="position:absolute;left:138px;top:474.5px;width:33px;height:25.0px;background:#8a96a3;border-radius:5px;"></div>
<div id="t80" class="t" style="left:138px;top:478.0px;line-height:18px;font-size:12px;font-weight:700;color:#fff;width:33px;text-align:center;">대기</div>
<div id="t81" class="t" style="left:176px;top:477.5px;line-height:19px;font-size:13px;font-weight:700;color:#2a2f36;">방금 전 요청</div>
<div style="position:absolute;left:244px;top:480.5px;width:1px;height:13.0px;background:#9aa3ad;border-radius:0px;"></div>
<div id="t82" class="t" style="left:250px;top:477.5px;line-height:19px;font-size:13px;font-weight:700;color:#2a2f36;">신경외과 벳칭</div>
<div id="t83" class="t" style="left:330.5px;top:477.5px;line-height:19px;font-size:13px;font-weight:400;color:#6f7a86;">오후 12:12 오더</div>
<div id="t84" class="t" style="left:653px;top:478.0px;line-height:18px;font-size:12px;font-weight:400;color:#5f6b78;">2개의 그룹</div>
<svg style="position:absolute;left:716px;top:483.59px" width="11" height="6.82" viewBox="0 0 11 6.82"><path d="M0 0H11L5.5 6.82Z" fill="#5f6f7e"/></svg>
<svg style="position:absolute;left:139px;top:511.2px" width="18" height="15.6" viewBox="0 0 30 26"><path d="M5.5 0.5H24.5A3 3 0 0 1 27.5 3.5V15.5A8 7.7 0 0 1 19.5 23.2H10.5A8 7.7 0 0 1 2.5 15.5V3.5A3 3 0 0 1 5.5 0.5Z" fill="#f0c29d"/><path d="M3.3 0.1H9.7L2.9 12.6C1.5 12.6 0.3 11.6 0.3 10V3.1A3 3 0 0 1 3.3 0.1Z" fill="#9c6239"/><path d="M26.7 0.1H20.3L27.1 12.6C28.5 12.6 29.7 11.6 29.7 10V3.1A3 3 0 0 0 26.7 0.1Z" fill="#9c6239"/><ellipse cx="15" cy="18.8" rx="8" ry="6.8" fill="#fde2b5"/><ellipse cx="11.9" cy="9.4" rx="1.1" ry="1.5" fill="#1a1a1a"/><ellipse cx="18.2" cy="9.4" rx="1.1" ry="1.5" fill="#1a1a1a"/><path d="M13.2 14.6Q15.1 14.1 17 14.6Q16.8 16.2 15.1 17.2Q13.4 16.2 13.2 14.6Z" fill="#1a1a1a"/></svg>
<div id="t85" class="t" style="left:162px;top:507.2px;line-height:22px;font-size:15px;font-weight:700;color:#2a2f36;">동지(435)</div>
<div id="t86" class="t" style="left:229.5px;top:510.0px;line-height:18px;font-size:12px;font-weight:400;color:#6f7a86;">종/품종</div>
<div id="t87" class="t" style="left:268.5px;top:510.0px;line-height:18px;font-size:12px;font-weight:700;color:#2a2f36;">개/토이 푸들</div>
<div id="t88" class="t" style="left:335.5px;top:510.0px;line-height:18px;font-size:12px;font-weight:400;color:#6f7a86;">보호자</div>
<div id="t89" class="t" style="left:370px;top:510.0px;line-height:18px;font-size:12px;font-weight:700;color:#2a2f36;">양혜지</div>
<div style="position:absolute;left:138px;top:538px;width:596px;height:36px;background:#f3f4f6;border-radius:4px;"></div>
<div id="t90" class="t" style="left:146.5px;top:545.7px;line-height:19px;font-size:13px;font-weight:400;color:#2a2f36;">처방 메모 : 123</div>
<div style="position:absolute;left:769px;top:74px;width:1100px;height:952px;background:#fff;border-radius:6px;"></div>
<div id="t91" class="t" style="left:784px;top:86.5px;line-height:21px;font-size:14px;font-weight:700;color:#222;">조제 상세 보기</div>
<div style="position:absolute;left:1829px;top:84px;width:25px;height:25px;background:#ebeef5;border-radius:4px;"></div>
<svg style="position:absolute;left:1834px;top:89px" width="15" height="15" viewBox="0 0 15 15"><path d="M1 1L14 14M14 1L1 14" stroke="#5f6f7e" stroke-width="1.6"/></svg>
<div style="position:absolute;left:769px;top:119px;width:1100px;height:1px;background:#d8dbe5;border-radius:0px;"></div>
<div style="position:absolute;left:784px;top:130px;width:43px;height:42px;background:#c4e0fb;border-radius:6px;"></div>
<svg style="position:absolute;left:790.5px;top:139.5px" width="30" height="26.0" viewBox="0 0 30 26"><path d="M5.5 0.5H24.5A3 3 0 0 1 27.5 3.5V15.5A8 7.7 0 0 1 19.5 23.2H10.5A8 7.7 0 0 1 2.5 15.5V3.5A3 3 0 0 1 5.5 0.5Z" fill="#f0c29d"/><path d="M3.3 0.1H9.7L2.9 12.6C1.5 12.6 0.3 11.6 0.3 10V3.1A3 3 0 0 1 3.3 0.1Z" fill="#9c6239"/><path d="M26.7 0.1H20.3L27.1 12.6C28.5 12.6 29.7 11.6 29.7 10V3.1A3 3 0 0 0 26.7 0.1Z" fill="#9c6239"/><ellipse cx="15" cy="18.8" rx="8" ry="6.8" fill="#fde2b5"/><ellipse cx="11.9" cy="9.4" rx="1.1" ry="1.5" fill="#1a1a1a"/><ellipse cx="18.2" cy="9.4" rx="1.1" ry="1.5" fill="#1a1a1a"/><path d="M13.2 14.6Q15.1 14.1 17 14.6Q16.8 16.2 15.1 17.2Q13.4 16.2 13.2 14.6Z" fill="#1a1a1a"/></svg>
<div id="t92" class="t" style="left:837px;top:130.0px;line-height:22px;font-size:15px;font-weight:700;color:#222;">강동생(478)</div>
<div id="t93" class="t" style="left:837px;top:154.0px;line-height:18px;font-size:12px;font-weight:400;color:#8f99a5;">종/품종</div>
<div id="t94" class="t" style="left:877.5px;top:154.0px;line-height:18px;font-size:12px;font-weight:700;color:#222;">개/꼬똥 드 툴레아</div>
<div id="t95" class="t" style="left:970px;top:154.0px;line-height:18px;font-size:12px;font-weight:400;color:#8f99a5;">성별</div>
<div id="t96" class="t" style="left:995.5px;top:154.0px;line-height:18px;font-size:12px;font-weight:700;color:#222;">SF</div>
<div id="t97" class="t" style="left:1019.5px;top:154.0px;line-height:18px;font-size:12px;font-weight:400;color:#8f99a5;">나이</div>
<div id="t98" class="t" style="left:1045.5px;top:154.0px;line-height:18px;font-size:12px;font-weight:700;color:#222;">3세 2개월</div>
<div id="t99" class="t" style="left:1104px;top:154.0px;line-height:18px;font-size:12px;font-weight:400;color:#8f99a5;">체중</div>
<div id="t100" class="t" style="left:1129.5px;top:154.0px;line-height:18px;font-size:12px;font-weight:700;color:#222;">20kg</div>
<div id="t101" class="t" style="left:1166.5px;top:154.0px;line-height:18px;font-size:12px;font-weight:400;color:#8f99a5;">보호자</div>
<div id="t102" class="t" style="left:1202.5px;top:154.0px;line-height:18px;font-size:12px;font-weight:700;color:#222;">강동찬</div>
<div id="t103" class="t" style="left:1535px;top:142.0px;line-height:18px;font-size:12px;font-weight:700;color:#333;">조제 담당자</div>
<div style="position:absolute;left:1595px;top:135px;width:100px;height:34px;background:#fff;border-radius:5px;border:1px solid #cfd3dc;box-sizing:border-box;"></div>
<div id="t104" class="t" style="left:1606px;top:141.0px;line-height:21px;font-size:14px;font-weight:700;color:#5c6a79;">벳칭</div>
<svg style="position:absolute;left:1670px;top:148.28px" width="12" height="7.4399999999999995" viewBox="0 0 12 7.4399999999999995"><path d="M0 0H12L6.0 7.4399999999999995Z" fill="#c5cad2"/></svg>
<div id="t105" class="t" style="left:1704px;top:142.0px;line-height:18px;font-size:12px;font-weight:700;color:#333;">현재 상태</div>
<div style="position:absolute;left:1754px;top:135px;width:100px;height:34px;background:#ebeef5;border-radius:5px;"></div>
<div id="t106" class="t" style="left:1765px;top:141.0px;line-height:21px;font-size:14px;font-weight:700;color:#5c6a79;">조제 완료</div>
<svg style="position:absolute;left:1830px;top:148.28px" width="12" height="7.4399999999999995" viewBox="0 0 12 7.4399999999999995"><path d="M0 0H12L6.0 7.4399999999999995Z" fill="#5f6f7e"/></svg>
<div id="t107" class="t" style="left:784px;top:199.5px;line-height:19px;font-size:13px;font-weight:400;color:#333;">처방 메모</div>
<div style="position:absolute;left:784px;top:225px;width:1070px;height:110px;background:#fff;border-radius:4px;border:1px solid #d0d4dd;box-sizing:border-box;"></div>
<div id="t108" class="t" style="left:795px;top:232.5px;line-height:19px;font-size:13px;font-weight:400;color:#333;">/</div>
<div style="position:absolute;left:784px;top:355px;width:1070px;height:190px;background:#e9ecf4;border-radius:6px;"></div>
<div id="t109" class="t" style="left:794px;top:365.7px;line-height:19px;font-size:13px;font-weight:700;color:#2a2f36;">처방 메모 :</div>
<svg style="position:absolute;left:1828px;top:371.59px" width="11" height="6.82" viewBox="0 0 11 6.82"><path d="M0 0H11L5.5 6.82Z" fill="#5f6f7e"/></svg>
<div style="position:absolute;left:794px;top:397px;width:1049px;height:137px;background:#d0d4de;border-radius:0px;"></div>
<div style="position:absolute;left:795px;top:398px;width:1047px;height:33px;background:#e9ecf4;border-radius:0px;"></div>
<div style="position:absolute;left:795px;top:432px;width:1047px;height:33px;background:#fff;border-radius:0px;"></div>
<div style="position:absolute;left:795px;top:466px;width:1047px;height:33px;background:#fff;border-radius:0px;"></div>
<div style="position:absolute;left:795px;top:500px;width:1047px;height:33px;background:#fff;border-radius:0px;"></div>
<div style="position:absolute;left:826px;top:398px;width:1px;height:135px;background:#d0d4de;border-radius:0px;"></div>
<div style="position:absolute;left:1282px;top:398px;width:1px;height:135px;background:#d0d4de;border-radius:0px;"></div>
<div style="position:absolute;left:1338px;top:398px;width:1px;height:135px;background:#d0d4de;border-radius:0px;"></div>
<div style="position:absolute;left:1394px;top:398px;width:1px;height:135px;background:#d0d4de;border-radius:0px;"></div>
<div style="position:absolute;left:1450px;top:398px;width:1px;height:135px;background:#d0d4de;border-radius:0px;"></div>
<div style="position:absolute;left:1506px;top:398px;width:1px;height:135px;background:#d0d4de;border-radius:0px;"></div>
<div style="position:absolute;left:1562px;top:398px;width:1px;height:135px;background:#d0d4de;border-radius:0px;"></div>
<div style="position:absolute;left:1618px;top:398px;width:1px;height:135px;background:#d0d4de;border-radius:0px;"></div>
<div style="position:absolute;left:1674px;top:398px;width:1px;height:135px;background:#d0d4de;border-radius:0px;"></div>
<div style="position:absolute;left:1730px;top:398px;width:1px;height:135px;background:#d0d4de;border-radius:0px;"></div>
<div style="position:absolute;left:1786px;top:398px;width:1px;height:135px;background:#d0d4de;border-radius:0px;"></div>
<div style="position:absolute;left:827px;top:398px;width:8px;height:135px;background:linear-gradient(90deg,rgba(0,0,0,0.045),rgba(0,0,0,0));border-radius:0px;"></div>
<svg style="position:absolute;left:801px;top:405px" width="20" height="20" viewBox="0 0 20 20"><rect x="0" y="0" width="20" height="20" rx="3" fill="#b4d6f4"/><path d="M5.5 10.3L8.6 13.2 14.5 7.3" stroke="#fff" stroke-width="1.5" fill="none"/></svg>
<div id="t110" class="t" style="left:834px;top:405.0px;line-height:19px;font-size:13px;font-weight:700;color:#222;">항목</div>
<div id="t111" class="t" style="left:1289px;top:405.0px;line-height:19px;font-size:13px;font-weight:700;color:#222;">경로</div>
<div id="t112" class="t" style="left:1345px;top:405.0px;line-height:19px;font-size:13px;font-weight:700;color:#222;">용량</div>
<div id="t113" class="t" style="left:1401px;top:405.0px;line-height:19px;font-size:13px;font-weight:700;color:#222;">단위</div>
<div id="t114" class="t" style="left:1457px;top:405.0px;line-height:19px;font-size:13px;font-weight:700;color:#222;">일투</div>
<div id="t115" class="t" style="left:1513px;top:405.0px;line-height:19px;font-size:13px;font-weight:700;color:#222;">일수</div>
<div id="t116" class="t" style="left:1569px;top:405.0px;line-height:19px;font-size:13px;font-weight:700;color:#222;">총투</div>
<div id="t117" class="t" style="left:1625px;top:405.0px;line-height:19px;font-size:13px;font-weight:700;color:#222;">총량</div>
<div id="t118" class="t" style="left:1681px;top:405.0px;line-height:19px;font-size:13px;font-weight:700;color:#222;">실수량</div>
<div id="t119" class="t" style="left:1737px;top:405.0px;line-height:19px;font-size:13px;font-weight:700;color:#222;">개수</div>
<div id="t120" class="t" style="left:1793px;top:405.0px;line-height:19px;font-size:13px;font-weight:700;color:#222;">담당의</div>
<svg style="position:absolute;left:801px;top:439px" width="20" height="20" viewBox="0 0 20 20"><rect x="0" y="0" width="20" height="20" rx="3" fill="#b4d6f4"/><path d="M5.5 10.3L8.6 13.2 14.5 7.3" stroke="#fff" stroke-width="1.5" fill="none"/></svg>
<div id="t121" class="t" style="left:834px;top:438.8px;line-height:21px;font-size:14px;font-weight:400;color:#222;">6-Mercaptopurine (Purinethol) Tab.</div>
<svg style="position:absolute;left:1261px;top:442.8px" width="12" height="12" viewBox="0 0 12 12"><circle cx="6" cy="6" r="6" fill="#5f6f7e"/><rect x="5.1" y="5" width="1.8" height="4.6" fill="#fff"/><circle cx="6" cy="3.2" r="1.05" fill="#fff"/></svg>
<div id="t122" class="t" style="left:1289px;top:438.8px;line-height:21px;font-size:14px;font-weight:400;color:#222;">PO</div>
<div id="t123" class="t" style="left:1345px;top:438.8px;line-height:21px;font-size:14px;font-weight:400;color:#222;">1</div>
<div id="t124" class="t" style="left:1401px;top:438.8px;line-height:21px;font-size:14px;font-weight:400;color:#222;">mg/m²</div>
<div id="t125" class="t" style="left:1457px;top:438.8px;line-height:21px;font-size:14px;font-weight:400;color:#222;">1</div>
<div id="t126" class="t" style="left:1513px;top:438.8px;line-height:21px;font-size:14px;font-weight:400;color:#222;">1</div>
<div id="t127" class="t" style="left:1569px;top:438.8px;line-height:21px;font-size:14px;font-weight:400;color:#222;">1</div>
<div id="t128" class="t" style="left:1625px;top:438.8px;line-height:21px;font-size:14px;font-weight:400;color:#222;">0.744</div>
<div id="t129" class="t" style="left:1681px;top:438.8px;line-height:21px;font-size:14px;font-weight:400;color:#222;">0</div>
<div id="t130" class="t" style="left:1737px;top:438.8px;line-height:21px;font-size:14px;font-weight:400;color:#222;">0.744</div>
<div id="t131" class="t" style="left:1793px;top:438.8px;line-height:21px;font-size:14px;font-weight:400;color:#222;">벳칭</div>
<svg style="position:absolute;left:801px;top:473px" width="20" height="20" viewBox="0 0 20 20"><rect x="0" y="0" width="20" height="20" rx="3" fill="#b4d6f4"/><path d="M5.5 10.3L8.6 13.2 14.5 7.3" stroke="#fff" stroke-width="1.5" fill="none"/></svg>
<div id="t132" class="t" style="left:834px;top:472.8px;line-height:21px;font-size:14px;font-weight:400;color:#222;">Actinomycin D Inj.</div>
<svg style="position:absolute;left:1261px;top:476.8px" width="12" height="12" viewBox="0 0 12 12"><circle cx="6" cy="6" r="6" fill="#5f6f7e"/><rect x="5.1" y="5" width="1.8" height="4.6" fill="#fff"/><circle cx="6" cy="3.2" r="1.05" fill="#fff"/></svg>
<div id="t133" class="t" style="left:1289px;top:472.8px;line-height:21px;font-size:14px;font-weight:400;color:#222;">IV</div>
<div id="t134" class="t" style="left:1345px;top:472.8px;line-height:21px;font-size:14px;font-weight:400;color:#222;">1</div>
<div id="t135" class="t" style="left:1401px;top:472.8px;line-height:21px;font-size:14px;font-weight:400;color:#222;">mg/m²</div>
<div id="t136" class="t" style="left:1457px;top:472.8px;line-height:21px;font-size:14px;font-weight:400;color:#222;">1</div>
<div id="t137" class="t" style="left:1513px;top:472.8px;line-height:21px;font-size:14px;font-weight:400;color:#222;">1</div>
<div id="t138" class="t" style="left:1569px;top:472.8px;line-height:21px;font-size:14px;font-weight:400;color:#222;">1</div>
<div id="t139" class="t" style="left:1625px;top:472.8px;line-height:21px;font-size:14px;font-weight:400;color:#222;">0.744</div>
<div id="t140" class="t" style="left:1681px;top:472.8px;line-height:21px;font-size:14px;font-weight:400;color:#222;">0</div>
<div id="t141" class="t" style="left:1737px;top:472.8px;line-height:21px;font-size:14px;font-weight:400;color:#222;">0.744</div>
<div id="t142" class="t" style="left:1793px;top:472.8px;line-height:21px;font-size:14px;font-weight:400;color:#222;">벳칭</div>
<svg style="position:absolute;left:801px;top:507px" width="20" height="20" viewBox="0 0 20 20"><rect x="0" y="0" width="20" height="20" rx="3" fill="#b4d6f4"/><path d="M5.5 10.3L8.6 13.2 14.5 7.3" stroke="#fff" stroke-width="1.5" fill="none"/></svg>
<div id="t143" class="t" style="left:834px;top:506.8px;line-height:21px;font-size:14px;font-weight:400;color:#222;">Amikacin Inj.</div>
<svg style="position:absolute;left:1261px;top:510.79999999999995px" width="12" height="12" viewBox="0 0 12 12"><circle cx="6" cy="6" r="6" fill="#5f6f7e"/><rect x="5.1" y="5" width="1.8" height="4.6" fill="#fff"/><circle cx="6" cy="3.2" r="1.05" fill="#fff"/></svg>
<div id="t144" class="t" style="left:1289px;top:506.8px;line-height:21px;font-size:14px;font-weight:400;color:#222;">IV</div>
<div id="t145" class="t" style="left:1345px;top:506.8px;line-height:21px;font-size:14px;font-weight:400;color:#222;">1</div>
<div id="t146" class="t" style="left:1401px;top:506.8px;line-height:21px;font-size:14px;font-weight:400;color:#222;">mg/kg</div>
<div id="t147" class="t" style="left:1457px;top:506.8px;line-height:21px;font-size:14px;font-weight:400;color:#222;">1</div>
<div id="t148" class="t" style="left:1513px;top:506.8px;line-height:21px;font-size:14px;font-weight:400;color:#222;">1</div>
<div id="t149" class="t" style="left:1569px;top:506.8px;line-height:21px;font-size:14px;font-weight:400;color:#222;">1</div>
<div id="t150" class="t" style="left:1625px;top:506.8px;line-height:21px;font-size:14px;font-weight:400;color:#222;">20</div>
<div id="t151" class="t" style="left:1681px;top:506.8px;line-height:21px;font-size:14px;font-weight:400;color:#222;">1</div>
<div id="t152" class="t" style="left:1737px;top:506.8px;line-height:21px;font-size:14px;font-weight:400;color:#222;">1</div>
<div id="t153" class="t" style="left:1793px;top:506.8px;line-height:21px;font-size:14px;font-weight:400;color:#222;">벳칭</div>
<div style="position:absolute;left:795px;top:534px;width:1048px;height:1px;background:rgba(0,0,0,0.06);border-radius:0px;"></div>
<div style="position:absolute;left:784px;top:555px;width:1070px;height:257px;background:#e9ecf4;border-radius:6px;"></div>
<div id="t154" class="t" style="left:794px;top:565.7px;line-height:19px;font-size:13px;font-weight:700;color:#2a2f36;">새 그룹</div>
<svg style="position:absolute;left:1828px;top:571.59px" width="11" height="6.82" viewBox="0 0 11 6.82"><path d="M0 0H11L5.5 6.82Z" fill="#5f6f7e"/></svg>
<div style="position:absolute;left:794px;top:597px;width:1049px;height:205px;background:#d0d4de;border-radius:0px;"></div>
<div style="position:absolute;left:795px;top:598px;width:1047px;height:33px;background:#e9ecf4;border-radius:0px;"></div>
<div style="position:absolute;left:795px;top:632px;width:1047px;height:33px;background:#fff;border-radius:0px;"></div>
<div style="position:absolute;left:795px;top:666px;width:1047px;height:33px;background:#fff;border-radius:0px;"></div>
<div style="position:absolute;left:795px;top:700px;width:1047px;height:33px;background:#fff;border-radius:0px;"></div>
<div style="position:absolute;left:795px;top:734px;width:1047px;height:33px;background:#fff;border-radius:0px;"></div>
<div style="position:absolute;left:795px;top:768px;width:1047px;height:33px;background:#fff;border-radius:0px;"></div>
<div style="position:absolute;left:826px;top:598px;width:1px;height:203px;background:#d0d4de;border-radius:0px;"></div>
<div style="position:absolute;left:1282px;top:598px;width:1px;height:203px;background:#d0d4de;border-radius:0px;"></div>
<div style="position:absolute;left:1338px;top:598px;width:1px;height:203px;background:#d0d4de;border-radius:0px;"></div>
<div style="position:absolute;left:1394px;top:598px;width:1px;height:203px;background:#d0d4de;border-radius:0px;"></div>
<div style="position:absolute;left:1450px;top:598px;width:1px;height:203px;background:#d0d4de;border-radius:0px;"></div>
<div style="position:absolute;left:1506px;top:598px;width:1px;height:203px;background:#d0d4de;border-radius:0px;"></div>
<div style="position:absolute;left:1562px;top:598px;width:1px;height:203px;background:#d0d4de;border-radius:0px;"></div>
<div style="position:absolute;left:1618px;top:598px;width:1px;height:203px;background:#d0d4de;border-radius:0px;"></div>
<div style="position:absolute;left:1674px;top:598px;width:1px;height:203px;background:#d0d4de;border-radius:0px;"></div>
<div style="position:absolute;left:1730px;top:598px;width:1px;height:203px;background:#d0d4de;border-radius:0px;"></div>
<div style="position:absolute;left:1786px;top:598px;width:1px;height:203px;background:#d0d4de;border-radius:0px;"></div>
<div style="position:absolute;left:827px;top:598px;width:8px;height:203px;background:linear-gradient(90deg,rgba(0,0,0,0.045),rgba(0,0,0,0));border-radius:0px;"></div>
<svg style="position:absolute;left:801px;top:605px" width="20" height="20" viewBox="0 0 20 20"><rect x="0" y="0" width="20" height="20" rx="3" fill="#b4d6f4"/><path d="M5.5 10.3L8.6 13.2 14.5 7.3" stroke="#fff" stroke-width="1.5" fill="none"/></svg>
<div id="t155" class="t" style="left:834px;top:605.0px;line-height:19px;font-size:13px;font-weight:700;color:#222;">항목</div>
<div id="t156" class="t" style="left:1289px;top:605.0px;line-height:19px;font-size:13px;font-weight:700;color:#222;">경로</div>
<div id="t157" class="t" style="left:1345px;top:605.0px;line-height:19px;font-size:13px;font-weight:700;color:#222;">용량</div>
<div id="t158" class="t" style="left:1401px;top:605.0px;line-height:19px;font-size:13px;font-weight:700;color:#222;">단위</div>
<div id="t159" class="t" style="left:1457px;top:605.0px;line-height:19px;font-size:13px;font-weight:700;color:#222;">일투</div>
<div id="t160" class="t" style="left:1513px;top:605.0px;line-height:19px;font-size:13px;font-weight:700;color:#222;">일수</div>
<div id="t161" class="t" style="left:1569px;top:605.0px;line-height:19px;font-size:13px;font-weight:700;color:#222;">총투</div>
<div id="t162" class="t" style="left:1625px;top:605.0px;line-height:19px;font-size:13px;font-weight:700;color:#222;">총량</div>
<div id="t163" class="t" style="left:1681px;top:605.0px;line-height:19px;font-size:13px;font-weight:700;color:#222;">실수량</div>
<div id="t164" class="t" style="left:1737px;top:605.0px;line-height:19px;font-size:13px;font-weight:700;color:#222;">개수</div>
<div id="t165" class="t" style="left:1793px;top:605.0px;line-height:19px;font-size:13px;font-weight:700;color:#222;">담당의</div>
<svg style="position:absolute;left:801px;top:639px" width="20" height="20" viewBox="0 0 20 20"><rect x="0" y="0" width="20" height="20" rx="3" fill="#b4d6f4"/><path d="M5.5 10.3L8.6 13.2 14.5 7.3" stroke="#fff" stroke-width="1.5" fill="none"/></svg>
<div id="t166" class="t" style="left:834px;top:638.8px;line-height:21px;font-size:14px;font-weight:400;color:#222;">(Vetcom)DermAllay Oatmeal Conditioner[OS] Spray</div>
<div id="t167" class="t" style="left:1289px;top:638.8px;line-height:21px;font-size:14px;font-weight:400;color:#222;">Skin</div>
<div id="t168" class="t" style="left:1345px;top:638.8px;line-height:21px;font-size:14px;font-weight:400;color:#222;">1</div>
<div id="t169" class="t" style="left:1401px;top:638.8px;line-height:21px;font-size:14px;font-weight:400;color:#222;">EA</div>
<div id="t170" class="t" style="left:1457px;top:638.8px;line-height:21px;font-size:14px;font-weight:400;color:#222;">1</div>
<div id="t171" class="t" style="left:1513px;top:638.8px;line-height:21px;font-size:14px;font-weight:400;color:#222;">1</div>
<div id="t172" class="t" style="left:1569px;top:638.8px;line-height:21px;font-size:14px;font-weight:400;color:#222;">1</div>
<div id="t173" class="t" style="left:1625px;top:638.8px;line-height:21px;font-size:14px;font-weight:400;color:#222;">1</div>
<div id="t174" class="t" style="left:1681px;top:638.8px;line-height:21px;font-size:14px;font-weight:400;color:#222;">1</div>
<div id="t175" class="t" style="left:1737px;top:638.8px;line-height:21px;font-size:14px;font-weight:400;color:#222;">1</div>
<div id="t176" class="t" style="left:1793px;top:638.8px;line-height:21px;font-size:14px;font-weight:400;color:#222;">벳칭</div>
<svg style="position:absolute;left:801px;top:673px" width="20" height="20" viewBox="0 0 20 20"><rect x="0" y="0" width="20" height="20" rx="3" fill="#b4d6f4"/><path d="M5.5 10.3L8.6 13.2 14.5 7.3" stroke="#fff" stroke-width="1.5" fill="none"/></svg>
<div id="t177" class="t" style="left:834px;top:672.8px;line-height:21px;font-size:14px;font-weight:400;color:#222;">dfasdfasdf</div>
<div id="t178" class="t" style="left:1289px;top:672.8px;line-height:21px;font-size:14px;font-weight:400;color:#222;">-</div>
<div id="t179" class="t" style="left:1345px;top:672.8px;line-height:21px;font-size:14px;font-weight:400;color:#222;">1</div>
<div id="t180" class="t" style="left:1401px;top:672.8px;line-height:21px;font-size:14px;font-weight:400;color:#222;">mg</div>
<div id="t181" class="t" style="left:1457px;top:672.8px;line-height:21px;font-size:14px;font-weight:400;color:#222;">1</div>
<div id="t182" class="t" style="left:1513px;top:672.8px;line-height:21px;font-size:14px;font-weight:400;color:#222;">1</div>
<div id="t183" class="t" style="left:1569px;top:672.8px;line-height:21px;font-size:14px;font-weight:400;color:#222;">1</div>
<div id="t184" class="t" style="left:1625px;top:672.8px;line-height:21px;font-size:14px;font-weight:400;color:#222;">1</div>
<div id="t185" class="t" style="left:1681px;top:672.8px;line-height:21px;font-size:14px;font-weight:400;color:#222;">0</div>
<div id="t186" class="t" style="left:1737px;top:672.8px;line-height:21px;font-size:14px;font-weight:400;color:#222;">1</div>
<div id="t187" class="t" style="left:1793px;top:672.8px;line-height:21px;font-size:14px;font-weight:400;color:#222;">벳칭</div>
<svg style="position:absolute;left:801px;top:707px" width="20" height="20" viewBox="0 0 20 20"><rect x="0" y="0" width="20" height="20" rx="3" fill="#b4d6f4"/><path d="M5.5 10.3L8.6 13.2 14.5 7.3" stroke="#fff" stroke-width="1.5" fill="none"/></svg>
<div id="t188" class="t" style="left:834px;top:706.8px;line-height:21px;font-size:14px;font-weight:400;color:#222;">Hill’s a/d feeding guide</div>
<div id="t189" class="t" style="left:1289px;top:706.8px;line-height:21px;font-size:14px;font-weight:400;color:#222;">PO</div>
<div id="t190" class="t" style="left:1345px;top:706.8px;line-height:21px;font-size:14px;font-weight:400;color:#222;">1</div>
<div id="t191" class="t" style="left:1401px;top:706.8px;line-height:21px;font-size:14px;font-weight:400;color:#222;">mg</div>
<div id="t192" class="t" style="left:1457px;top:706.8px;line-height:21px;font-size:14px;font-weight:400;color:#222;">1</div>
<div id="t193" class="t" style="left:1513px;top:706.8px;line-height:21px;font-size:14px;font-weight:400;color:#222;">1</div>
<div id="t194" class="t" style="left:1569px;top:706.8px;line-height:21px;font-size:14px;font-weight:400;color:#222;">1</div>
<div id="t195" class="t" style="left:1625px;top:706.8px;line-height:21px;font-size:14px;font-weight:400;color:#222;">1</div>
<div id="t196" class="t" style="left:1681px;top:706.8px;line-height:21px;font-size:14px;font-weight:400;color:#222;">0</div>
<div id="t197" class="t" style="left:1737px;top:706.8px;line-height:21px;font-size:14px;font-weight:400;color:#222;">1</div>
<div id="t198" class="t" style="left:1793px;top:706.8px;line-height:21px;font-size:14px;font-weight:400;color:#222;">벳칭</div>
<svg style="position:absolute;left:801px;top:741px" width="20" height="20" viewBox="0 0 20 20"><rect x="0" y="0" width="20" height="20" rx="3" fill="#b4d6f4"/><path d="M5.5 10.3L8.6 13.2 14.5 7.3" stroke="#fff" stroke-width="1.5" fill="none"/></svg>
<div id="t199" class="t" style="left:834px;top:740.8px;line-height:21px;font-size:14px;font-weight:400;color:#222;">Azidothymidine Tab.</div>
<svg style="position:absolute;left:1261px;top:744.8px" width="12" height="12" viewBox="0 0 12 12"><circle cx="6" cy="6" r="6" fill="#5f6f7e"/><rect x="5.1" y="5" width="1.8" height="4.6" fill="#fff"/><circle cx="6" cy="3.2" r="1.05" fill="#fff"/></svg>
<div id="t200" class="t" style="left:1289px;top:740.8px;line-height:21px;font-size:14px;font-weight:400;color:#222;">PO</div>
<div id="t201" class="t" style="left:1345px;top:740.8px;line-height:21px;font-size:14px;font-weight:400;color:#222;">1</div>
<div id="t202" class="t" style="left:1401px;top:740.8px;line-height:21px;font-size:14px;font-weight:400;color:#222;">mg/kg</div>
<div id="t203" class="t" style="left:1457px;top:740.8px;line-height:21px;font-size:14px;font-weight:400;color:#222;">1</div>
<div id="t204" class="t" style="left:1513px;top:740.8px;line-height:21px;font-size:14px;font-weight:400;color:#222;">1</div>
<div id="t205" class="t" style="left:1569px;top:740.8px;line-height:21px;font-size:14px;font-weight:400;color:#222;">1</div>
<div id="t206" class="t" style="left:1625px;top:740.8px;line-height:21px;font-size:14px;font-weight:400;color:#222;">20</div>
<div id="t207" class="t" style="left:1681px;top:740.8px;line-height:21px;font-size:14px;font-weight:400;color:#222;">0</div>
<div id="t208" class="t" style="left:1737px;top:740.8px;line-height:21px;font-size:14px;font-weight:400;color:#222;">20</div>
<div id="t209" class="t" style="left:1793px;top:740.8px;line-height:21px;font-size:14px;font-weight:400;color:#222;">벳칭</div>
<svg style="position:absolute;left:801px;top:775px" width="20" height="20" viewBox="0 0 20 20"><rect x="0" y="0" width="20" height="20" rx="3" fill="#b4d6f4"/><path d="M5.5 10.3L8.6 13.2 14.5 7.3" stroke="#fff" stroke-width="1.5" fill="none"/></svg>
<div id="t210" class="t" style="left:834px;top:774.8px;line-height:21px;font-size:14px;font-weight:400;color:#222;">Azidothymidine Tab.</div>
<svg style="position:absolute;left:1261px;top:778.8px" width="12" height="12" viewBox="0 0 12 12"><circle cx="6" cy="6" r="6" fill="#5f6f7e"/><rect x="5.1" y="5" width="1.8" height="4.6" fill="#fff"/><circle cx="6" cy="3.2" r="1.05" fill="#fff"/></svg>
<div id="t211" class="t" style="left:1289px;top:774.8px;line-height:21px;font-size:14px;font-weight:400;color:#222;">PO</div>
<div id="t212" class="t" style="left:1345px;top:774.8px;line-height:21px;font-size:14px;font-weight:400;color:#222;">1</div>
<div id="t213" class="t" style="left:1401px;top:774.8px;line-height:21px;font-size:14px;font-weight:400;color:#222;">mg/kg</div>
<div id="t214" class="t" style="left:1457px;top:774.8px;line-height:21px;font-size:14px;font-weight:400;color:#222;">1</div>
<div id="t215" class="t" style="left:1513px;top:774.8px;line-height:21px;font-size:14px;font-weight:400;color:#222;">1</div>
<div id="t216" class="t" style="left:1569px;top:774.8px;line-height:21px;font-size:14px;font-weight:400;color:#222;">1</div>
<div id="t217" class="t" style="left:1625px;top:774.8px;line-height:21px;font-size:14px;font-weight:400;color:#222;">20</div>
<div id="t218" class="t" style="left:1681px;top:774.8px;line-height:21px;font-size:14px;font-weight:400;color:#222;">0</div>
<div id="t219" class="t" style="left:1737px;top:774.8px;line-height:21px;font-size:14px;font-weight:400;color:#222;">20</div>
<div id="t220" class="t" style="left:1793px;top:774.8px;line-height:21px;font-size:14px;font-weight:400;color:#222;">벳칭</div>
<div style="position:absolute;left:795px;top:802px;width:1048px;height:1px;background:rgba(0,0,0,0.06);border-radius:0px;"></div>
<div style="position:absolute;left:769px;top:963px;width:1100px;height:9px;background:linear-gradient(rgba(255,255,255,0),rgba(0,0,0,0.035));border-radius:0px;"></div>
<div style="position:absolute;left:784px;top:989px;width:40px;height:20px;background:#a9b3bd;border-radius:10px;"></div>
<svg style="position:absolute;left:806px;top:991px" width="16" height="16" viewBox="0 0 16 16"><circle cx="8" cy="8" r="7.2" fill="#dfe3ea"/></svg>
<div id="t221" class="t" style="left:834px;top:989.5px;line-height:18px;font-size:12px;font-weight:400;color:#333;">조제 완료 시 다음 이동</div>
<svg style="position:absolute;left:946px;top:990.5px" width="16" height="16" viewBox="0 0 16 16"><circle cx="8" cy="8" r="8" fill="#5f6f7e"/><text x="8" y="12.3" font-size="12" font-weight="700" text-anchor="middle" fill="#fff" font-family="Liberation Sans">?</text></svg>
<div id="t222" class="t" style="left:1471px;top:988.5px;line-height:21px;font-size:14px;font-weight:700;color:#4d5866;">오더 삭제</div>
<div style="position:absolute;left:1545px;top:982px;width:101px;height:34px;background:#ebeef5;border-radius:5px;"></div>
<div id="t223" class="t" style="left:1556px;top:988.5px;line-height:21px;font-size:14px;font-weight:700;color:#4d5866;">진료 차트 보기</div>
<div style="position:absolute;left:1656px;top:982px;width:86px;height:34px;background:#ebeef5;border-radius:5px;"></div>
<div id="t224" class="t" style="left:1667px;top:988.5px;line-height:21px;font-size:14px;font-weight:700;color:#4d5866;">처방전 출력</div>
<div style="position:absolute;left:1752px;top:982px;width:102px;height:34px;background:#0a8cff;border-radius:5px;"></div>
<div id="t225" class="t" style="left:1763px;top:988.5px;line-height:21px;font-size:14px;font-weight:700;color:#fff;">조제 완료 취소</div>
<div style="position:absolute;left:1880px;top:65px;width:36px;height:970px;background:#fff;border-radius:0px;"></div>
<div style="position:absolute;left:1887px;top:75px;width:26px;height:26px;background:#ebeef5;border-radius:4px;"></div>
<div style="position:absolute;left:1887px;top:114px;width:26px;height:26px;background:#ebeef5;border-radius:4px;"></div>
<div style="position:absolute;left:1887px;top:152px;width:26px;height:26px;background:#ebeef5;border-radius:4px;"></div>
<svg style="position:absolute;left:1891px;top:80px" width="18" height="16" viewBox="0 0 18 16"><circle cx="5.2" cy="4.5" r="3" fill="#5f6f7e"/><path d="M0 13.5C0 10 2.3 8.7 5.2 8.7S10.4 10 10.4 13.5Z" fill="#5f6f7e"/><g fill="#5f6f7e"><rect x="11.5" y="1.5" width="6" height="1.6"/><rect x="12.5" y="5.5" width="5" height="1.6"/><rect x="13.5" y="9.5" width="4" height="1.6"/></g></svg>
<svg style="position:absolute;left:1891px;top:119px" width="18" height="16" viewBox="0 0 18 16"><circle cx="11" cy="5.5" r="4" stroke="#5f6f7e" stroke-width="1.7" fill="none"/><path d="M13.8 8.3L17 11.5" stroke="#5f6f7e" stroke-width="1.8"/><g fill="#5f6f7e"><rect x="0.5" y="6" width="3" height="1.4"/><rect x="0.5" y="9.5" width="6" height="1.4"/><rect x="0.5" y="12.5" width="10" height="1.6"/></g></svg>
<svg style="position:absolute;left:1891px;top:157px" width="18" height="18" viewBox="0 0 18 18"><path d="M9.5 1.5C5.2 1.5 2 4.3 2 7.7 2 9.2 2.6 10.5 3.7 11.5L1.8 15.5 6.5 13.4C7.4 13.7 8.4 13.9 9.5 13.9 13.8 13.9 17 11.1 17 7.7S13.8 1.5 9.5 1.5Z" fill="#5f6f7e"/><circle cx="16" cy="15.5" r="2" fill="#e8232b"/></svg>
<div style="position:absolute;left:1880px;top:191px;width:36px;height:1px;background:#d8dbe5;border-radius:0px;"></div>
<div style="position:absolute;left:1880px;top:948px;width:36px;height:1px;background:#d8dbe5;border-radius:0px;"></div>
<div style="position:absolute;left:1887px;top:959px;width:26px;height:26px;background:#ebeef5;border-radius:4px;"></div>
<svg style="position:absolute;left:1892px;top:964px" width="16" height="16" viewBox="0 0 16 16"><circle cx="8" cy="8" r="8" fill="#5f6f7e"/><rect x="6.9" y="6.6" width="2.2" height="6" fill="#fff"/><circle cx="8" cy="4.2" r="1.3" fill="#fff"/></svg>
<div style="position:absolute;left:1887px;top:998px;width:26px;height:26px;background:#ebeef5;border-radius:4px;"></div>
<svg style="position:absolute;left:1892px;top:1003px" width="16" height="16" viewBox="0 0 16 16"><circle cx="8" cy="8" r="8" fill="#5f6f7e"/><text x="8" y="12.5" font-size="12.5" font-weight="700" text-anchor="middle" fill="#fff" font-family="Liberation Sans">?</text></svg>
<svg style="position:absolute;left:0px;top:1024px" width="12" height="11" viewBox="0 0 12 11"><path d="M0.5 0.5Q1.5 9.5 11 10.5" stroke="#777" stroke-width="1.2" fill="none" opacity=".6"/></svg>
<svg style="position:absolute;left:1909px;top:1029px" width="7" height="6" viewBox="0 0 7 6"><path d="M6.5 0.5Q6 5 0.5 5.5" stroke="#777" stroke-width="1.2" fill="none" opacity=".6"/></svg>
</body></html>
